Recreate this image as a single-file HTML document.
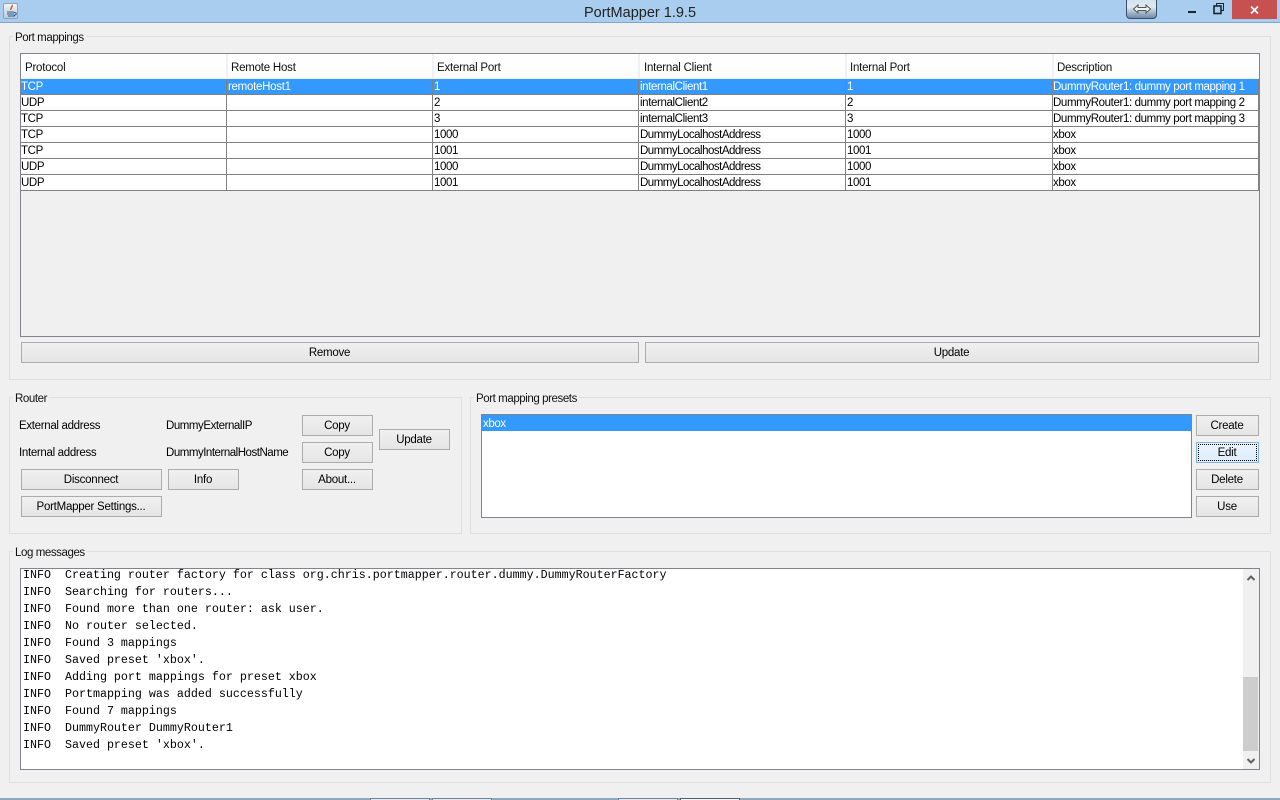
<!DOCTYPE html>
<html>
<head>
<meta charset="utf-8">
<title>PortMapper 1.9.5</title>
<style>
html,body{margin:0;padding:0;width:1280px;height:800px;overflow:hidden;background:#f0f0f0;}
body{position:relative;font-family:"Liberation Sans",sans-serif;font-size:11.5px;letter-spacing:-.38px;color:#000;}
div{position:absolute;box-sizing:border-box;white-space:nowrap;}
.grp{border:1px solid #dfdfdf;}
.lg{background:#f0f0f0;padding:0 2px;height:14px;line-height:16px;color:#111;letter-spacing:-.42px;}
.btn{border:1px solid #acacac;background:linear-gradient(#f0f0f0,#e5e5e5);text-align:center;line-height:21px;height:21px;color:#000;letter-spacing:-.25px;padding-right:1px;}
.t{height:16px;line-height:19px;color:#000;letter-spacing:-.32px;}
.c{height:16px;line-height:17px;}
.d{letter-spacing:-.5px;}
.h{line-height:18px;height:16px;color:#111;letter-spacing:-.22px;}
.log{font-family:"Liberation Mono",monospace;font-size:11.67px;letter-spacing:0;line-height:19px;height:17px;white-space:pre;color:#000;left:23px;}
.vl{width:1px;background:#808080;}
.hl{height:1px;background:#808080;left:21px;width:1238px;}
</style>
</head>
<body>
<!-- title bar -->
<div style="left:0;top:0;width:1280px;height:22px;background:#a8cdef;"></div>
<div style="left:0;top:22px;width:1280px;height:1px;background:#83a6c8;"></div>
<div style="left:3px;top:3px;width:15px;height:16px;background:linear-gradient(#eef3f8,#b9cbdc);border:1px solid #8ba4bc;border-radius:2px;"></div>
<svg style="position:absolute;left:4px;top:4px" width="14" height="14" viewBox="0 0 14 14">
<path d="M8 1C9 3 6 4 7 6" stroke="#e0651a" stroke-width="1.6" fill="none"/>
<path d="M3 8H10M3 10H10M4 12H11" stroke="#2f5f8f" stroke-width="1.1" fill="none"/>
<path d="M10 8.5C13 8 13 11 10 11" stroke="#2f5f8f" stroke-width="1" fill="none"/>
</svg>
<div style="left:440px;width:400px;top:3px;height:18px;line-height:20px;text-align:center;font-size:14.5px;letter-spacing:0;color:#222;">PortMapper 1.9.5</div>
<div style="left:1126px;top:-3px;width:31px;height:22px;border:1px solid #38506a;border-radius:4px;background:linear-gradient(#cfe0ef,#dfe9f2 45%,#6f8aa6);"></div>
<svg style="position:absolute;left:1132px;top:3px" width="20" height="12" viewBox="0 0 20 12">
<path d="M1.5 6L6 2V4.5H14V2L18.5 6L14 10V7.5H6V10Z" fill="#f2f2f2" stroke="#555" stroke-width="1"/>
</svg>
<div style="left:1188px;top:11px;width:8px;height:2px;background:#1b2530;"></div>
<svg style="position:absolute;left:1213px;top:3px" width="12" height="12" viewBox="0 0 12 12">
<path d="M3.5 2.5V.5H10.5V7.5H8.5" fill="none" stroke="#1b2530"/>
<rect x="1" y="3" width="7" height="7.5" fill="none" stroke="#1b2530" stroke-width="1.6"/>
</svg>
<div style="left:1232px;top:0;width:45px;height:19px;background:#c75050;"></div>
<svg style="position:absolute;left:1249px;top:5px" width="11" height="10" viewBox="0 0 11 10">
<path d="M2 1.5L9 8.5M9 1.5L2 8.5" stroke="#fff" stroke-width="1.7" fill="none"/>
</svg>

<!-- port mappings -->
<div class="grp" style="left:9px;top:36px;width:1262px;height:344px;"></div>
<div class="lg" style="left:13px;top:30px;">Port mappings</div>
<div style="left:20px;top:53px;width:1240px;height:284px;border:1px solid #83838f;background:#f0f0f0;"></div>
<div style="left:21px;top:54px;width:1238px;height:25px;background:#fff;"></div>
<div style="left:21px;top:54px;width:1238px;height:25px;background:linear-gradient(#fff,#fbfcfd);"></div>
<div style="left:21px;top:78px;width:1238px;height:1px;background:#eef2f6;"></div>
<div style="left:226px;top:54px;width:2px;height:25px;background:#eef2f6;"></div>
<div style="left:432px;top:54px;width:2px;height:25px;background:#eef2f6;"></div>
<div style="left:638px;top:54px;width:2px;height:25px;background:#eef2f6;"></div>
<div style="left:845px;top:54px;width:2px;height:25px;background:#eef2f6;"></div>
<div style="left:1052px;top:54px;width:2px;height:25px;background:#eef2f6;"></div>
<div class="h" style="left:25px;top:59px;">Protocol</div>
<div class="h" style="left:231px;top:59px;">Remote Host</div>
<div class="h" style="left:437px;top:59px;">External Port</div>
<div class="h" style="left:644px;top:59px;">Internal Client</div>
<div class="h" style="left:850px;top:59px;">Internal Port</div>
<div class="h" style="left:1057px;top:59px;">Description</div>

<div style="left:21px;top:79px;width:1238px;height:112px;background:#fff;"></div>
<div style="left:21px;top:79px;width:1238px;height:15px;background:#3399ff;"></div>
<div class="hl" style="top:94px;"></div>
<div class="hl" style="top:110px;"></div>
<div class="hl" style="top:126px;"></div>
<div class="hl" style="top:142px;"></div>
<div class="hl" style="top:158px;"></div>
<div class="hl" style="top:174px;"></div>
<div class="hl" style="top:190px;"></div>
<div class="vl" style="left:226px;top:79px;height:112px;"></div>
<div class="vl" style="left:432px;top:79px;height:112px;"></div>
<div class="vl" style="left:638px;top:79px;height:112px;"></div>
<div class="vl" style="left:845px;top:79px;height:112px;"></div>
<div class="vl" style="left:1052px;top:79px;height:112px;"></div>
<div class="vl" style="left:1258px;top:79px;height:112px;"></div>

<div class="c" style="left:21px;top:79px;color:#fff;">TCP</div>
<div class="c" style="left:228px;top:79px;color:#fff;letter-spacing:-.28px;">remoteHost1</div>
<div class="c" style="left:434px;top:79px;color:#fff;">1</div>
<div class="c" style="left:640px;top:79px;color:#fff;">internalClient1</div>
<div class="c" style="left:847px;top:79px;color:#fff;">1</div>
<div class="c" style="left:1053px;top:79px;color:#fff;">DummyRouter1: dummy port mapping 1</div>

<div class="c" style="left:21px;top:95px;">UDP</div>
<div class="c" style="left:434px;top:95px;">2</div>
<div class="c" style="left:640px;top:95px;">internalClient2</div>
<div class="c" style="left:847px;top:95px;">2</div>
<div class="c" style="left:1053px;top:95px;">DummyRouter1: dummy port mapping 2</div>

<div class="c" style="left:21px;top:111px;">TCP</div>
<div class="c" style="left:434px;top:111px;">3</div>
<div class="c" style="left:640px;top:111px;">internalClient3</div>
<div class="c" style="left:847px;top:111px;">3</div>
<div class="c" style="left:1053px;top:111px;">DummyRouter1: dummy port mapping 3</div>

<div class="c" style="left:21px;top:127px;">TCP</div>
<div class="c" style="left:434px;top:127px;">1000</div>
<div class="c d" style="left:640px;top:127px;">DummyLocalhostAddress</div>
<div class="c" style="left:847px;top:127px;">1000</div>
<div class="c" style="left:1053px;top:127px;">xbox</div>

<div class="c" style="left:21px;top:143px;">TCP</div>
<div class="c" style="left:434px;top:143px;">1001</div>
<div class="c d" style="left:640px;top:143px;">DummyLocalhostAddress</div>
<div class="c" style="left:847px;top:143px;">1001</div>
<div class="c" style="left:1053px;top:143px;">xbox</div>

<div class="c" style="left:21px;top:159px;">UDP</div>
<div class="c" style="left:434px;top:159px;">1000</div>
<div class="c d" style="left:640px;top:159px;">DummyLocalhostAddress</div>
<div class="c" style="left:847px;top:159px;">1000</div>
<div class="c" style="left:1053px;top:159px;">xbox</div>

<div class="c" style="left:21px;top:175px;">UDP</div>
<div class="c" style="left:434px;top:175px;">1001</div>
<div class="c d" style="left:640px;top:175px;">DummyLocalhostAddress</div>
<div class="c" style="left:847px;top:175px;">1001</div>
<div class="c" style="left:1053px;top:175px;">xbox</div>

<div class="btn" style="left:21px;top:342px;width:618px;">Remove</div>
<div class="btn" style="left:645px;top:342px;width:614px;">Update</div>

<!-- router -->
<div class="grp" style="left:9px;top:397px;width:453px;height:137px;"></div>
<div class="lg" style="left:13px;top:391px;">Router</div>
<div class="t" style="left:19px;top:417px;">External address</div>
<div class="t" style="left:19px;top:444px;">Internal address</div>
<div class="t" style="left:166px;top:417px;letter-spacing:-.45px;">DummyExternalIP</div>
<div class="t" style="left:166px;top:444px;letter-spacing:-.48px;">DummyInternalHostName</div>
<div class="btn" style="left:302px;top:415px;width:71px;">Copy</div>
<div class="btn" style="left:302px;top:442px;width:71px;">Copy</div>
<div class="btn" style="left:379px;top:429px;width:71px;">Update</div>
<div class="btn" style="left:21px;top:469px;width:141px;">Disconnect</div>
<div class="btn" style="left:168px;top:469px;width:71px;">Info</div>
<div class="btn" style="left:302px;top:469px;width:71px;">About...</div>
<div class="btn" style="left:21px;top:496px;width:141px;">PortMapper Settings...</div>

<!-- presets -->
<div class="grp" style="left:470px;top:397px;width:801px;height:137px;"></div>
<div class="lg" style="left:474px;top:391px;">Port mapping presets</div>
<div style="left:481px;top:414px;width:711px;height:104px;border:1px solid #83838f;background:#fff;"></div>
<div style="left:482px;top:415px;width:709px;height:16px;background:#3399ff;color:#fff;padding-left:1px;line-height:18px;">xbox</div>
<div class="btn" style="left:1196px;top:415px;width:63px;">Create</div>
<div class="btn" style="left:1196px;top:442px;width:63px;border-color:#7eb4ea;background:linear-gradient(#ecf4fc,#dcecfc);">Edit</div>
<div style="left:1198px;top:444px;width:59px;height:17px;border:1px dotted #000;"></div>
<div class="btn" style="left:1196px;top:469px;width:63px;">Delete</div>
<div class="btn" style="left:1196px;top:496px;width:63px;">Use</div>

<!-- log -->
<div class="grp" style="left:9px;top:551px;width:1262px;height:232px;"></div>
<div class="lg" style="left:13px;top:545px;">Log messages</div>
<div style="left:20px;top:568px;width:1240px;height:202px;border:1px solid #83838f;background:#fff;"></div>
<div style="left:1243px;top:569px;width:16px;height:200px;background:#f0f0f0;"></div>
<div style="left:1243px;top:677px;width:15px;height:74px;background:#cdcdcd;"></div>
<svg style="position:absolute;left:1246px;top:574px" width="10" height="8" viewBox="0 0 10 8">
<path d="M1.5 6L5 2.5L8.5 6" stroke="#606060" stroke-width="2" fill="none"/>
</svg>
<svg style="position:absolute;left:1246px;top:757px" width="10" height="8" viewBox="0 0 10 8">
<path d="M1.5 2L5 5.5L8.5 2" stroke="#606060" stroke-width="2" fill="none"/>
</svg>
<div class="log" style="top:566px;">INFO  Creating router factory for class org.chris.portmapper.router.dummy.DummyRouterFactory</div>
<div class="log" style="top:583px;">INFO  Searching for routers...</div>
<div class="log" style="top:600px;">INFO  Found more than one router: ask user.</div>
<div class="log" style="top:617px;">INFO  No router selected.</div>
<div class="log" style="top:634px;">INFO  Found 3 mappings</div>
<div class="log" style="top:651px;">INFO  Saved preset 'xbox'.</div>
<div class="log" style="top:668px;">INFO  Adding port mappings for preset xbox</div>
<div class="log" style="top:685px;">INFO  Portmapping was added successfully</div>
<div class="log" style="top:702px;">INFO  Found 7 mappings</div>
<div class="log" style="top:719px;">INFO  DummyRouter DummyRouter1</div>
<div class="log" style="top:736px;">INFO  Saved preset 'xbox'.</div>

<!-- taskbar sliver -->
<div style="left:0;top:798px;width:1280px;height:2px;background:#8fa8bb;"></div>
<div style="left:370px;top:798px;width:60px;height:2px;background:#dfe8ef;border:1px solid #6e8496;border-bottom:0;"></div>
<div style="left:432px;top:798px;width:60px;height:2px;background:#dfe8ef;border:1px solid #6e8496;border-bottom:0;"></div>
<div style="left:618px;top:798px;width:60px;height:2px;background:#dfe8ef;border:1px solid #6e8496;border-bottom:0;"></div>
<div style="left:680px;top:798px;width:60px;height:2px;background:#f4f7f9;border:1px solid #4b5f6e;border-bottom:0;"></div>
</body>
</html>
